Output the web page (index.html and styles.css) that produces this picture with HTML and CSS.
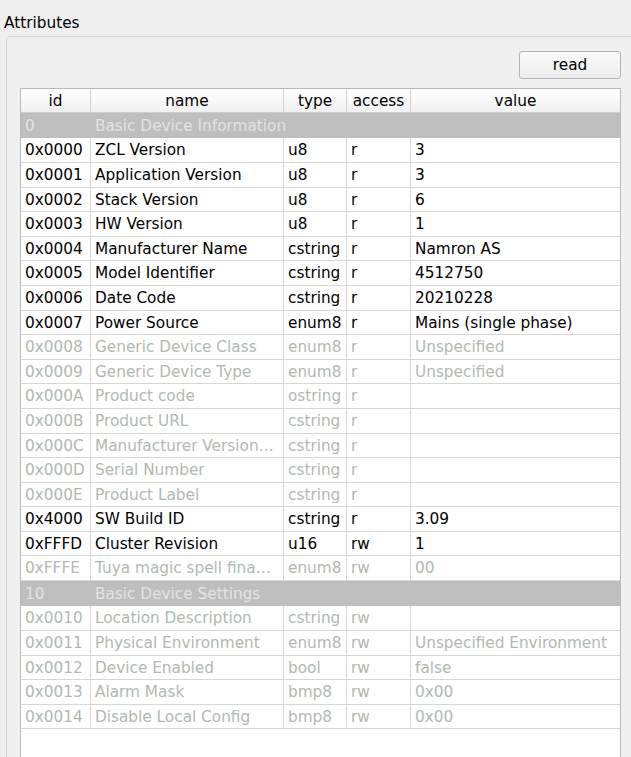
FILE: index.html
```html
<!DOCTYPE html>
<html>
<head>
<meta charset="utf-8">
<link rel="stylesheet" href="styles.css">
</head>
<body>
<div class="title">Attributes</div>
<div class="groupbox">
  <div class="inner">
    <div class="toolbar"><button class="btn">read</button></div>
    <div class="table">
      <div class="row head"><div>id</div><div>name</div><div>type</div><div>access</div><div>value</div></div>
      <div class="row group"><div>0</div><div class="span">Basic Device Information</div></div>
      <div class="row"><div>0x0000</div><div>ZCL Version</div><div>u8</div><div>r</div><div>3</div></div>
      <div class="row"><div>0x0001</div><div>Application Version</div><div>u8</div><div>r</div><div>3</div></div>
      <div class="row"><div>0x0002</div><div>Stack Version</div><div>u8</div><div>r</div><div>6</div></div>
      <div class="row"><div>0x0003</div><div>HW Version</div><div>u8</div><div>r</div><div>1</div></div>
      <div class="row"><div>0x0004</div><div>Manufacturer Name</div><div>cstring</div><div>r</div><div>Namron AS</div></div>
      <div class="row"><div>0x0005</div><div>Model Identifier</div><div>cstring</div><div>r</div><div>4512750</div></div>
      <div class="row"><div>0x0006</div><div>Date Code</div><div>cstring</div><div>r</div><div>20210228</div></div>
      <div class="row"><div>0x0007</div><div>Power Source</div><div>enum8</div><div>r</div><div>Mains (single phase)</div></div>
      <div class="row dis"><div>0x0008</div><div>Generic Device Class</div><div>enum8</div><div>r</div><div>Unspecified</div></div>
      <div class="row dis"><div>0x0009</div><div>Generic Device Type</div><div>enum8</div><div>r</div><div>Unspecified</div></div>
      <div class="row dis"><div>0x000A</div><div>Product code</div><div>ostring</div><div>r</div><div></div></div>
      <div class="row dis"><div>0x000B</div><div>Product URL</div><div>cstring</div><div>r</div><div></div></div>
      <div class="row dis"><div>0x000C</div><div>Manufacturer Version…</div><div>cstring</div><div>r</div><div></div></div>
      <div class="row dis"><div>0x000D</div><div>Serial Number</div><div>cstring</div><div>r</div><div></div></div>
      <div class="row dis"><div>0x000E</div><div>Product Label</div><div>cstring</div><div>r</div><div></div></div>
      <div class="row"><div>0x4000</div><div>SW Build ID</div><div>cstring</div><div>r</div><div>3.09</div></div>
      <div class="row"><div>0xFFFD</div><div>Cluster Revision</div><div>u16</div><div>rw</div><div>1</div></div>
      <div class="row dis"><div>0xFFFE</div><div>Tuya magic spell fina…</div><div>enum8</div><div>rw</div><div>00</div></div>
      <div class="row group"><div>10</div><div class="span">Basic Device Settings</div></div>
      <div class="row dis"><div>0x0010</div><div>Location Description</div><div>cstring</div><div>rw</div><div></div></div>
      <div class="row dis"><div>0x0011</div><div>Physical Environment</div><div>enum8</div><div>rw</div><div>Unspecified Environment</div></div>
      <div class="row dis"><div>0x0012</div><div>Device Enabled</div><div>bool</div><div>rw</div><div>false</div></div>
      <div class="row dis"><div>0x0013</div><div>Alarm Mask</div><div>bmp8</div><div>rw</div><div>0x00</div></div>
      <div class="row dis"><div>0x0014</div><div>Disable Local Config</div><div>bmp8</div><div>rw</div><div>0x00</div></div>
    </div>
  </div>
</div>
</body>
</html>
```
FILE: styles.css
```css
html, body {
  margin: 0;
  padding: 0;
  background: #efefef;
  overflow: hidden;
  height: 757px;
}
body {
  font-family: "DejaVu Sans", "Liberation Sans", sans-serif;
  font-size: 15.3px;
  color: #000;
}
.title {
  padding: 13px 0 0 4px;
  line-height: 20px;
  height: 20px;
}
.groupbox {
  margin: 3px 0 0 6px;
  width: 660px;
  height: 760px;
  border: 1px solid #d4d4d4;
  border-radius: 4px;
  background: #f0f0f0;
  box-sizing: border-box;
}
.inner {
  width: 601px;
  padding: 14px 0 0 13px;
}
.toolbar {
  display: flex;
  justify-content: flex-end;
  margin-bottom: 9px;
}
.btn {
  width: 102px;
  height: 28px;
  font-family: inherit;
  font-size: 15.3px;
  color: #000;
  border: 1px solid #b4b4b4;
  border-radius: 3px;
  background: linear-gradient(#fbfbfb, #ececec);
  padding: 0;
}
.table {
  width: 601px;
  height: 700px;
  border: 1px solid #b8b8b8;
  background: #fff;
  box-sizing: border-box;
}
.row {
  display: grid;
  grid-template-columns: 70px 193px 63px 64px 1fr;
  height: 24.6px;
  box-sizing: border-box;
  border-bottom: 1px solid #d6d6d6;
  line-height: 25px;
  white-space: nowrap;
}
.row > div {
  border-right: 1px solid #d6d6d6;
  padding-left: 4px;
  overflow: hidden;
}
.row > div:last-child {
  border-right: none;
}
.row.head {
  height: 24px;
  line-height: 24px;
  background: linear-gradient(#ffffff, #f1f1f1);
  border-bottom: 1px solid #cfcfcf;
}
.row.head > div {
  text-align: center;
  padding-left: 0;
  border-right-color: #d2d2d2;
}
.row.group {
  height: 25.4px;
  line-height: 27px;
  background: #bebebe;
  color: #e4e4e4;
  border-bottom-color: #bebebe;
}
.row.group > div {
  border-right: none;
}
.row.group > .span {
  grid-column: 2 / 6;
}
.row.dis {
  color: #b0b9b0;
}
```
